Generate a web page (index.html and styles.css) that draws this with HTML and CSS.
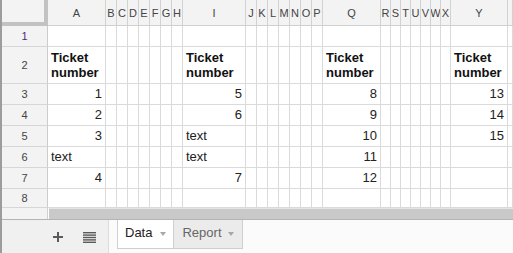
FILE: index.html
```html
<!DOCTYPE html>
<html>
<head>
<meta charset="utf-8">
<link rel="stylesheet" href="styles.css">
</head>
<body>
<div class="app">
  <div class="sheet">
    <div class="row hdr">
      <div class="corner"></div>
      <div class="ch">A</div><div class="ch">B</div><div class="ch">C</div><div class="ch">D</div><div class="ch">E</div><div class="ch">F</div><div class="ch">G</div><div class="ch">H</div>
      <div class="ch">I</div><div class="ch">J</div><div class="ch">K</div><div class="ch">L</div><div class="ch">M</div><div class="ch">N</div><div class="ch">O</div><div class="ch">P</div>
      <div class="ch">Q</div><div class="ch">R</div><div class="ch">S</div><div class="ch">T</div><div class="ch">U</div><div class="ch">V</div><div class="ch">W</div><div class="ch">X</div>
      <div class="ch">Y</div><div class="ch"></div>
    </div>
    <div class="row r1">
      <div class="rh sel">1</div>
      <span></span><span></span><span></span><span></span><span></span><span></span><span></span><span></span>
      <span></span><span></span><span></span><span></span><span></span><span></span><span></span><span></span>
      <span></span><span></span><span></span><span></span><span></span><span></span><span></span><span></span>
      <span></span><span></span>
    </div>
    <div class="row r2">
      <div class="rh">2</div>
      <div class="c b">Ticket number</div><span></span><span></span><span></span><span></span><span></span><span></span><span></span>
      <div class="c b">Ticket number</div><span></span><span></span><span></span><span></span><span></span><span></span><span></span>
      <div class="c b">Ticket number</div><span></span><span></span><span></span><span></span><span></span><span></span><span></span>
      <div class="c b">Ticket number</div><span></span>
    </div>
    <div class="row">
      <div class="rh">3</div>
      <div class="c n">1</div><span></span><span></span><span></span><span></span><span></span><span></span><span></span>
      <div class="c n">5</div><span></span><span></span><span></span><span></span><span></span><span></span><span></span>
      <div class="c n">8</div><span></span><span></span><span></span><span></span><span></span><span></span><span></span>
      <div class="c n">13</div><span></span>
    </div>
    <div class="row">
      <div class="rh">4</div>
      <div class="c n">2</div><span></span><span></span><span></span><span></span><span></span><span></span><span></span>
      <div class="c n">6</div><span></span><span></span><span></span><span></span><span></span><span></span><span></span>
      <div class="c n">9</div><span></span><span></span><span></span><span></span><span></span><span></span><span></span>
      <div class="c n">14</div><span></span>
    </div>
    <div class="row">
      <div class="rh">5</div>
      <div class="c n">3</div><span></span><span></span><span></span><span></span><span></span><span></span><span></span>
      <div class="c">text</div><span></span><span></span><span></span><span></span><span></span><span></span><span></span>
      <div class="c n">10</div><span></span><span></span><span></span><span></span><span></span><span></span><span></span>
      <div class="c n">15</div><span></span>
    </div>
    <div class="row">
      <div class="rh">6</div>
      <div class="c">text</div><span></span><span></span><span></span><span></span><span></span><span></span><span></span>
      <div class="c">text</div><span></span><span></span><span></span><span></span><span></span><span></span><span></span>
      <div class="c n">11</div><span></span><span></span><span></span><span></span><span></span><span></span><span></span>
      <div class="c n"></div><span></span>
    </div>
    <div class="row">
      <div class="rh">7</div>
      <div class="c n">4</div><span></span><span></span><span></span><span></span><span></span><span></span><span></span>
      <div class="c n">7</div><span></span><span></span><span></span><span></span><span></span><span></span><span></span>
      <div class="c n">12</div><span></span><span></span><span></span><span></span><span></span><span></span><span></span>
      <div class="c n"></div><span></span>
    </div>
    <div class="row r8">
      <div class="rh">8</div>
      <span></span><span></span><span></span><span></span><span></span><span></span><span></span><span></span>
      <span></span><span></span><span></span><span></span><span></span><span></span><span></span><span></span>
      <span></span><span></span><span></span><span></span><span></span><span></span><span></span><span></span>
      <span></span><span></span>
    </div>
    <div class="hscroll">
      <div class="hs-left"></div>
      <div class="hs-bar"></div>
    </div>
  </div>
  <div class="tabbar">
    <div class="tb-left">
      <svg class="ico-plus" width="10" height="10" viewBox="0 0 10 10"><rect x="4" y="0" width="2" height="10" fill="#5a5a5a"/><rect x="0" y="4" width="10" height="2" fill="#5a5a5a"/></svg>
      <svg class="ico-list" width="13" height="11" viewBox="0 0 13 11"><rect x="0" y="0" width="13" height="1.4" fill="#5a5a5a"/><rect x="0" y="2.4" width="13" height="1.4" fill="#5a5a5a"/><rect x="0" y="4.8" width="13" height="1.4" fill="#5a5a5a"/><rect x="0" y="7.2" width="13" height="1.4" fill="#5a5a5a"/><rect x="0" y="9.6" width="13" height="1.4" fill="#5a5a5a"/></svg>
    </div>
    <div class="tabs">
      <div class="tab active">Data<i class="arrow"></i></div>
      <div class="tab">Report<i class="arrow"></i></div>
    </div>
  </div>
</div>
</body>
</html>
```
FILE: styles.css
```css
html, body {
  margin: 0;
  padding: 0;
  background: #ffffff;
}
body {
  width: 513px;
  height: 253px;
  overflow: hidden;
  font-family: "Liberation Sans", Arial, sans-serif;
}
.app {
  border-left: 2px solid #9c9c9c;
  height: 253px;
  box-sizing: border-box;
  display: flex;
  flex-direction: column;
}
.row {
  display: grid;
  grid-template-columns: 46px 58px repeat(7, 11px) 63px repeat(7, 11px) 58px repeat(7, 10px) 57px 1fr;
  height: 21px;
}
.row > * {
  box-sizing: border-box;
  border-right: 1px solid #dadada;
  border-bottom: 1px solid #dadada;
  overflow: hidden;
  white-space: nowrap;
}
.hdr { height: 26px; }
.r2 { height: 37px; }
.r8 { height: 19px; }
.hdr > * {
  background: #f3f3f3;
  border-right-color: #d2d2d2;
  border-bottom-color: #cfcfcf;
}
.corner {
  border-right: 4px solid #c2c2c2 !important;
  border-bottom: 4px solid #c2c2c2 !important;
}
.ch, .rh {
  display: flex;
  align-items: center;
  justify-content: center;
  font-size: 11px;
  color: #444;
}
.rh {
  background: #f3f3f3;
  border-right-color: #cccccc !important;
  border-bottom-color: #d6d6d6 !important;
}
.rh.sel { color: #4f2c7a; }
.c {
  display: flex;
  align-items: flex-end;
  padding: 0 3px 3px 3px;
  font-size: 13px;
  line-height: 15px;
  color: #222;
}
.c.n { justify-content: flex-end; }
.c.b {
  font-weight: bold;
  white-space: normal;
  color: #111;
}
.hscroll {
  display: flex;
  height: 12px;
  box-sizing: border-box;
  border-bottom: 1px solid #b4b4b4;
}
.hs-left {
  width: 46px;
  background: #f3f3f3;
  border-right: 1px solid #d0d0d0;
  box-sizing: border-box;
}
.hs-bar {
  flex: 1;
  margin-left: 1px;
  background: #c9c9c9;
  border-top: 1px solid #e4e4e4;
}
.tabbar {
  flex: 1;
  display: flex;
  background: #fbfbfb;
}
.tb-left {
  width: 107px;
  box-sizing: border-box;
  background: #f0f0f0;
  border-right: 1px solid #dcdcdc;
  display: flex;
  align-items: center;
  padding-left: 51px;
  padding-top: 1px;
  gap: 20px;
}
.tabs {
  display: flex;
  align-items: flex-start;
  padding-left: 8px;
}
.tab {
  height: 29px;
  box-sizing: border-box;
  padding: 5px 8px 0 8px;
  font-size: 13px;
  line-height: 16px;
  color: #666;
  background: #ebebeb;
  border: 1px solid #cfcfcf;
  border-top: none;
  display: flex;
  align-items: flex-start;
  gap: 6px;
}
.tab.active {
  background: #ffffff;
  color: #222;
  padding-left: 7px;
  padding-right: 7px;
  gap: 8px;
  border-right: none;
}
.arrow {
  display: block;
  width: 0;
  height: 0;
  margin-top: 7px;
  border-left: 3px solid transparent;
  border-right: 3px solid transparent;
  border-top: 4px solid #a8a8a8;
}
```
